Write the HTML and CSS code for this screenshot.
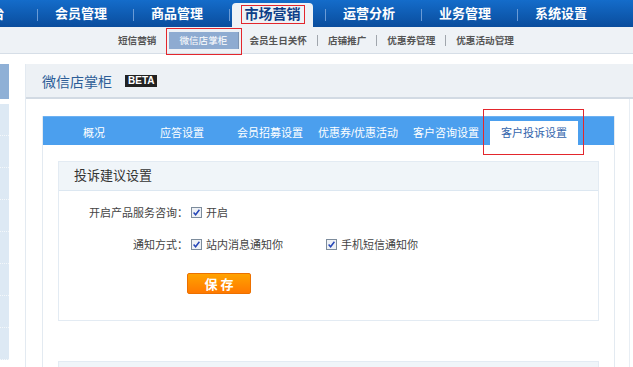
FILE: index.html
```html
<!DOCTYPE html>
<html lang="zh-CN">
<head>
  <meta charset="UTF-8">
  <title>微信店掌柜</title>
  <link rel="stylesheet" href="styles.css">
</head>
<body>
  <div class="topnav">
    <a class="nav-item first">控制台</a>
    <a class="nav-item">会员管理</a>
    <a class="nav-item">商品管理</a>
    <a class="nav-item active"><span class="tab"><span class="mark">市场营销</span></span></a>
    <a class="nav-item">运营分析</a>
    <a class="nav-item">业务管理</a>
    <a class="nav-item">系统设置</a>
  </div>

  <div class="subnav">
    <a>短信营销</a><i></i>
    <a class="on">微信店掌柜</a>
    <a>会员生日关怀</a><i></i>
    <a>店铺推广</a><i></i>
    <a>优惠券管理</a><i></i>
    <a>优惠活动管理</a>
  </div>

  <div class="main">
    <ul class="side">
      <li class="side-top"></li>
      <li></li><li></li><li></li><li></li><li></li><li></li><li></li><li></li>
    </ul>

    <div class="panel">
      <div class="panel-head">
        <h2>微信店掌柜</h2>
        <span class="beta">BETA</span>
      </div>
      <div class="panel-body">
        <div class="tabbox">
          <ul class="tabs">
            <li>概况</li>
            <li>应答设置</li>
            <li>会员招募设置</li>
            <li>优惠券/优惠活动</li>
            <li>客户咨询设置</li>
            <li class="current">客户投诉设置</li>
          </ul>
          <div class="tab-content">
            <div class="box">
              <div class="box-head">投诉建议设置</div>
              <div class="box-body">
                <div class="row">
                  <label>开启产品服务咨询：</label>
                  <span class="check"><svg width="11" height="11" viewBox="0 0 11 11"><rect x="0.5" y="0.5" width="10" height="10" fill="#eef1f5" stroke="#7d8c9c"/><path d="M2.6 5.6 L4.6 7.8 L8.4 2.8" fill="none" stroke="#2546b8" stroke-width="1.5"/></svg></span>
                  <span class="opt">开启</span>
                </div>
                <div class="row">
                  <label>通知方式：</label>
                  <span class="check"><svg width="11" height="11" viewBox="0 0 11 11"><rect x="0.5" y="0.5" width="10" height="10" fill="#eef1f5" stroke="#7d8c9c"/><path d="M2.6 5.6 L4.6 7.8 L8.4 2.8" fill="none" stroke="#2546b8" stroke-width="1.5"/></svg></span>
                  <span class="opt">站内消息通知你</span>
                  <span class="check second"><svg width="11" height="11" viewBox="0 0 11 11"><rect x="0.5" y="0.5" width="10" height="10" fill="#eef1f5" stroke="#7d8c9c"/><path d="M2.6 5.6 L4.6 7.8 L8.4 2.8" fill="none" stroke="#2546b8" stroke-width="1.5"/></svg></span>
                  <span class="opt">手机短信通知你</span>
                </div>
                <button class="btn">保 存</button>
              </div>
            </div>
            <div class="box next"></div>
          </div>
        </div>
      </div>
    </div>
  </div>
</body>
</html>
```

FILE: styles.css
```css
body {
  margin: 0;
  font-family: "Liberation Sans", "Noto Sans CJK SC", sans-serif;
  background-color: #fff;
  width: 633px;
  height: 367px;
  overflow: hidden;
}
a {
  text-decoration: none;
}
ul {
  list-style: none;
  margin: 0;
  padding: 0;
}

/* top menu */
.topnav {
  display: flex;
  height: 27px;
  background: linear-gradient(#146cca, #0a4d9d);
  overflow: hidden;
}
.nav-item {
  position: relative;
  flex: 0 0 96px;
  text-align: center;
  line-height: 28px;
  font-size: 13px;
  font-weight: bold;
  color: #fff;
}
.nav-item.first {
  margin-left: -63px;
}
.nav-item::before {
  content: "";
  position: absolute;
  left: 4px;
  top: 9px;
  width: 1px;
  height: 12px;
  background-color: #6a9bd6;
}
.nav-item.first::before {
  display: none;
}
.nav-item.active .tab {
  display: block;
  margin: 3px 8px 0 7px;
  height: 24px;
  line-height: 22px;
  background-color: #eef2f6;
  border-radius: 4px 4px 0 0;
}
.nav-item.active .mark {
  display: inline-block;
  padding: 0 3px;
  line-height: 17px;
  border: 1px solid #e3262c;
  font-size: 14px;
  color: #0c3e88;
  vertical-align: middle;
}

/* second menu */
.subnav {
  display: flex;
  align-items: center;
  height: 26px;
  padding-left: 108px;
  background-color: #eef2f6;
  border-bottom: 1px solid #d6dee7;
  font-size: 9.6px;
  font-weight: bold;
}
.subnav a {
  padding: 0 10px;
  color: #555;
}
.subnav i {
  width: 1px;
  height: 11px;
  background-color: #a0a6ad;
}
.subnav a.on {
  position: relative;
  margin-left: 2px;
  width: 49px;
  padding: 0 10px;
  line-height: 17px;
  background-color: #8eabd1;
  border-right: 1px solid #7d95b4;
  color: #fff;
  font-weight: normal;
}
.subnav a.on::after {
  content: "";
  position: absolute;
  left: -3px;
  right: -4px;
  top: -4px;
  bottom: -6px;
  border: 1px solid #e3262c;
}

/* page */
.main {
  display: flex;
  gap: 16px;
  margin-top: 10px;
  height: 304px;
  overflow: hidden;
}
.side {
  flex: 0 0 9px;
  background-color: #fff;
}
.side li {
  height: 31px;
  background-color: #dde9f4;
  border-bottom: 1px dotted #f4f8fb;
}
.side li.side-top {
  height: 35px;
  margin-bottom: 5px;
  border: none;
  background-color: #8fb0d6;
}

.panel {
  flex: 0 0 607px;
  border-left: 1px solid #e3eaf1;
}
.panel-head {
  display: flex;
  align-items: center;
  height: 33px;
  padding-left: 16px;
  background-color: #edf1f5;
  border-bottom: 2px solid #d2dae3;
}
.panel-head h2 {
  margin: 0;
  font-size: 14px;
  font-weight: normal;
  color: #2c5d97;
}
.beta {
  margin-left: 13px;
  padding: 0 3px;
  line-height: 12px;
  background-color: #222;
  color: #fff;
  font-size: 10px;
  font-weight: bold;
}
.panel-body {
  margin-right: 3px;
  padding: 17px 14px 0 16px;
  border-right: 1px solid #e8eef4;
  height: 252px;
}

/* tabs */
.tabbox {
  border-left: 1px solid #e3eaf1;
  border-right: 1px solid #e3eaf1;
  height: 252px;
}
.tabs {
  display: flex;
  align-items: flex-end;
  height: 29px;
  padding-left: 7px;
  background-color: #4b9fee;
  border-top: 1px solid #6db1f2;
  box-sizing: border-box;
}
.tabs li {
  flex: 0 0 88px;
  height: 24px;
  line-height: 24px;
  text-align: center;
  font-size: 11px;
  color: #fff;
}
.tabs li.current {
  position: relative;
  background-color: #fff;
  color: #3566ad;
}
.tabs li.current::after {
  content: "";
  position: absolute;
  left: -7px;
  right: -6px;
  top: -12px;
  bottom: -10px;
  border: 1px solid #e3262c;
}
.tab-content {
  padding: 16px 15px 0;
}

/* settings box */
.box {
  border: 1px solid #e3ebf3;
}
.box-head {
  height: 28px;
  line-height: 28px;
  padding-left: 15px;
  background-color: #f0f5f9;
  border-bottom: 1px solid #dce7f1;
  font-size: 13px;
  color: #333;
}
.box-body {
  padding: 11px 0 26px;
}
.row {
  display: flex;
  align-items: center;
  height: 20px;
  margin-bottom: 12px;
  font-size: 11px;
  color: #444;
}
.row label {
  width: 129px;
  text-align: right;
}
.check {
  display: flex;
  margin: 0 4px 0 3px;
}
.check.second {
  margin-left: 43px;
}
.btn {
  display: block;
  margin: 19px 0 0 128px;
  width: 64px;
  height: 21px;
  padding: 0;
  border: 1px solid #ec7000;
  border-radius: 2px;
  background: linear-gradient(#ffa300, #ff7900);
  color: #fff;
  font-family: "Noto Sans CJK SC", sans-serif;
  font-size: 13px;
  font-weight: bold;
  line-height: 19px;
}
.box.next {
  margin-top: 40px;
  height: 30px;
  background-color: #f0f5f9;
}
```
